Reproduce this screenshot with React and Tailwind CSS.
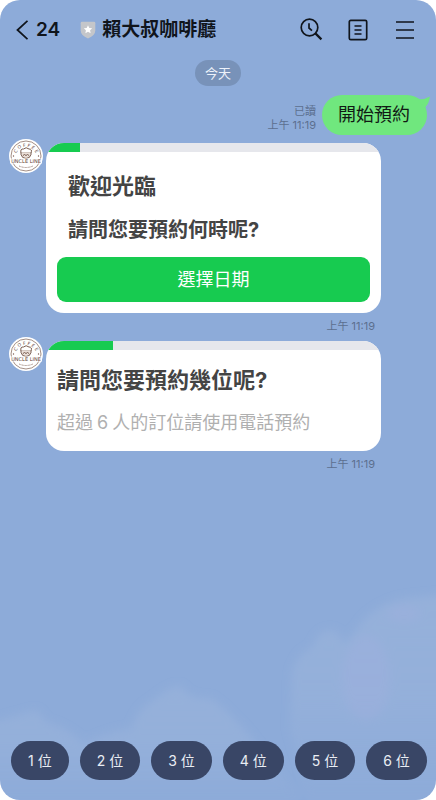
import React from 'react';

const messages = [
  {
    id: 1,
    progress: 10,
    title: '歡迎光臨',
    question: '請問您要預約何時呢?',
    action: '選擇日期',
    time: '上午 11:19',
  },
  {
    id: 2,
    progress: 20,
    title: '請問您要預約幾位呢?',
    time: '上午 11:19',
  },
];

const seats = [1, 2, 3, 4, 5, 6];

const Sky = () => (
  <svg
    className="absolute bottom-0 left-0 w-full h-60 pointer-events-none"
    viewBox="0 0 436 240"
    preserveAspectRatio="none"
    aria-hidden="true"
  >
    <defs>
      <filter id="soft" x="-10%" y="-10%" width="120%" height="120%">
        <feGaussianBlur stdDeviation="4" />
      </filter>
      <linearGradient id="cloud" x1="0" y1="0" x2="0" y2="1">
        <stop offset="0" stopColor="#99b3db" stopOpacity="0.7" />
        <stop offset="0.5" stopColor="#99b3db" stopOpacity="0.6" />
        <stop offset="1" stopColor="#99b3db" stopOpacity="0" />
      </linearGradient>
    </defs>
    <g filter="url(#soft)">
      <path
        d="M310 240 L290 170 L292 112 Q298 92 312 88 Q318 70 332 70 Q342 74 343 84 Q356 72 362 62 Q380 42 408 38 L450 34 V240 Z"
        fill="url(#cloud)"
      />
      <path
        d="M-14 240 V164 Q14 156 36 150 Q42 156 46 162 Q66 166 84 184 Q106 172 132 168 Q136 150 154 140 Q170 126 180 126 Q190 140 210 138 Q228 150 250 176 L300 240 Z"
        fill="url(#cloud)"
      />
      <ellipse cx="366" cy="118" rx="24" ry="42" fill="#9eafdd" opacity="0.5" />
      <ellipse cx="404" cy="54" rx="16" ry="8" fill="#9eafdd" opacity="0.5" />
    </g>
  </svg>
);

const Avatar = () => (
  <svg className="w-[34px] h-[34px] shrink-0" viewBox="0 0 68 68" role="img" aria-label="Uncle Line Coffee">
    <defs>
      <path id="arc" d="M14 30 A21 21 0 0 1 54 30" />
    </defs>
    <circle cx="34" cy="34" r="34" fill="#fff" />
    <circle cx="34" cy="34" r="30" fill="none" stroke="#8d7266" strokeWidth="1.6" />
    <text fontFamily="DejaVu Sans" fontSize="9" fill="#5e4036">
      <textPath href="#arc" startOffset="50%" textAnchor="middle">C O F F E E</textPath>
    </text>
    <g fill="none" stroke="#6a4c40" strokeWidth="1.8">
      <path d="M24 28 Q22 19 29 20 Q34 15 40 20 Q47 20 44 28 Z" />
      <path d="M24 27 V31 Q26 39 34 39 Q42 39 44 31 V27" fill="#eadfd8" />
      <path d="M28 33 Q31 29 34 33 Q37 29 40 33" />
    </g>
    <rect x="2" y="39" width="64" height="10" fill="#fff" />
    <text x="34" y="47" textAnchor="middle" fontFamily="DejaVu Sans" fontSize="10" fill="#5e4036">
      UNCLE LINE
    </text>
    <path d="M20 54 Q34 60 48 54" fill="none" stroke="#a08a80" strokeWidth="2" strokeDasharray="2 1" />
    <circle cx="9" cy="34" r="1.4" fill="#7a5c50" />
    <circle cx="59" cy="34" r="1.4" fill="#7a5c50" />
  </svg>
);

const Header = () => (
  <header className="relative flex items-center h-[60px] pl-4 pr-[19px] text-[#10151c]">
    <button type="button" aria-label="返回" className="flex items-center gap-2">
      <svg className="w-3 h-5" viewBox="0 0 12 20" fill="none" stroke="currentColor" strokeWidth="1.8">
        <path d="M11.5 .8 L1.5 10 L11.5 19.2" />
      </svg>
      <span className="text-[19px] leading-6 font-semibold">24</span>
    </button>
    <svg className="w-4 h-[18px] ml-5 mr-1.5" viewBox="0 0 16 18" aria-hidden="true">
      <path d="M2 .8 H14 Q15.3 .8 15.3 2.2 V9.5 Q15.3 14.5 8 17.4 Q.7 14.5 .7 9.5 V2.2 Q.7 .8 2 .8Z" fill="#c4c6ca" />
      <path d="M8 4.2 L9.3 6.9 L12.2 7.3 L10.1 9.3 L10.6 12.2 L8 10.8 L5.4 12.2 L5.9 9.3 L3.8 7.3 L6.7 6.9Z" fill="#fff" />
    </svg>
    <h1 className="text-[19px] leading-6 font-bold whitespace-nowrap">賴大叔咖啡廳</h1>
    <div className="flex items-center gap-[23px] ml-auto">
      <button type="button" aria-label="搜尋">
        <svg className="w-6 h-6" viewBox="0 0 24 24" fill="none" stroke="currentColor" strokeWidth="1.7">
          <circle cx="10.5" cy="9.5" r="8.3" />
          <path d="M16.4 15.4 L22.4 21.4" strokeWidth="2.2" />
          <path d="M10 5.2 V10 L13 12.6" />
        </svg>
      </button>
      <button type="button" aria-label="記事本">
        <svg className="w-6 h-6" viewBox="0 0 24 24" fill="none" stroke="currentColor" strokeWidth="1.7">
          <rect x="3.3" y="2.3" width="17.4" height="19.4" rx="1.5" />
          <path d="M8.5 8 H15.5 M8.5 12 H15.5 M8.5 16 H15.5" />
        </svg>
      </button>
      <button type="button" aria-label="選單">
        <svg className="w-6 h-6" viewBox="0 0 24 24" fill="none" stroke="currentColor" strokeWidth="1.7">
          <path d="M3 4 H21 M3 12 H21 M3 20 H21" />
        </svg>
      </button>
    </div>
  </header>
);

const SentMessage = () => (
  <div className="flex items-end justify-end gap-1.5 pr-[9px] mt-[9px]">
    <p className="pb-[3px] text-right text-[11px] leading-[14px] text-[#5c6f8f]">
      已讀
      <br />
      上午 11:19
    </p>
    <div className="relative rounded-[20px] bg-[#70e77e] pl-4 pr-[17px] py-2 text-[18px] leading-6 text-[#101a14]">
      開始預約
      <svg className="absolute top-0 -right-[3px] w-4 h-4" viewBox="0 0 16 16" fill="#70e77e" aria-hidden="true">
        <path d="M3 4 Q10 5 15.8 1.4 Q15.4 8 11 12.5 Z" />
      </svg>
    </div>
  </div>
);

const BotMessage = ({ msg }) => (
  <article className="flex items-start gap-[3px] pl-[9px] pr-[55px]">
    <Avatar />
    <div className="flex-1 mt-1">
      <div className="rounded-[18px] overflow-hidden bg-white text-[#444]">
        <div className="h-[9px] bg-[#e6e7ec]">
          <div className="h-full bg-[#17cb50]" style={{ width: `${msg.progress}%` }} />
        </div>
        {msg.action ? (
          <div className="px-[11px] pt-5 pb-[11px]">
            <h2 className="px-[11px] text-[22px] leading-7 font-bold">{msg.title}</h2>
            <p className="px-[11px] mt-4 text-[20px] leading-7 font-bold">{msg.question}</p>
            <button
              type="button"
              className="w-full h-[45px] mt-[13px] rounded-[9px] bg-[#17cb50] text-[18px] leading-6 text-white"
            >
              {msg.action}
            </button>
          </div>
        ) : (
          <div className="px-[11px] pt-4 pb-[15px]">
            <h2 className="text-[22px] leading-7 font-bold">{msg.title}</h2>
            <p className="mt-4 text-[18px] leading-[26px] text-[#b0b0b0]">
              超過<span className="mx-1">6</span>人的訂位請使用電話預約
            </p>
          </div>
        )}
      </div>
      <p className="pr-1.5 mt-1.5 text-right text-[11px] leading-[14px] text-[#5c6f8f]">{msg.time}</p>
    </div>
  </article>
);

const App = () => {
  return (
    <div className="min-h-screen bg-white font-[Inter,'Noto_Sans_CJK_TC',sans-serif]">
      <main className="relative flex flex-col min-h-screen overflow-hidden rounded-[20px] bg-[#8dabd9]">
        <Sky />
        <Header />

        <div className="relative self-center rounded-full bg-[#7892b9] px-2.5 py-1 text-[13px] leading-[18px] text-[#edf2fa]">
          今天
        </div>

        <section className="relative flex-1">
          <SentMessage />
          <div className="flex flex-col gap-1 mt-1">
            {messages.map((msg) => (
              <BotMessage key={msg.id} msg={msg} />
            ))}
          </div>
        </section>

        {/* Quick replies */}
        <nav className="relative flex gap-[11px] overflow-x-auto pl-[11px] pb-5 [scrollbar-width:none]">
          {seats.map((n) => (
            <button
              key={n}
              type="button"
              className="shrink-0 h-[39px] px-[17px] rounded-full bg-[#394666] text-[14px] leading-5 text-[#e9edf4]"
            >
              {n} 位
            </button>
          ))}
        </nav>
      </main>
    </div>
  );
};

export default App;
